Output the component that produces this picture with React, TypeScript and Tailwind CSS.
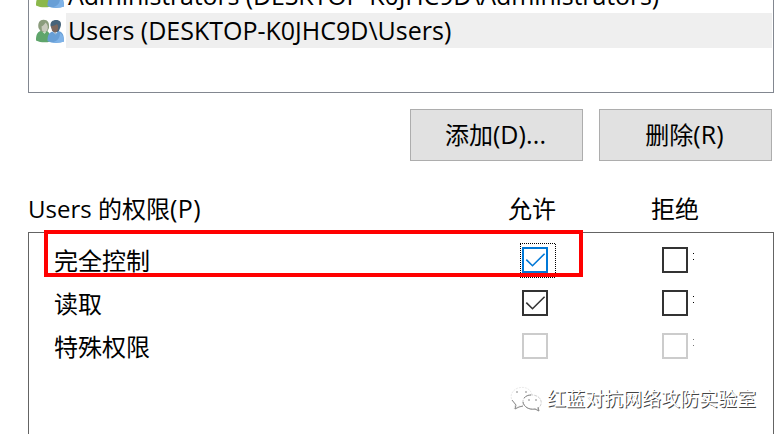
import React from 'react';

const latin = "font-['Open_Sans','Noto_Sans_CJK_SC',sans-serif]";

function UsersIcon({ coat }: { coat: string }) {
  return (
    <svg width="28" height="24" viewBox="0 0 28 24" className="block shrink-0">
      <path d="M2.500 9C1.500 3.500 4 .7 7.500.8c4.500 0 6 3 5.500 8.200l-2 4H5z" fill="#8b9c7c" />
      <path d="M5.500 7.500c2-.8 3-2.500 4-4 2.500 2 3 5.500 1.500 8L9 13.500 6 11.500z" fill="#c9cabd" />
      <path d="M0 21.500C0 16 1 13.500 4.500 12l4 2 2.500-2c2 1 3 3 3 5v5.500c-4 1.500-10 1-14-1z" fill={coat} />
      <path d="M6.500 12.500 8.500 15l2-2.500-2 .8z" fill="#c8dcc4" />
      <path d="M14.500 7c-.5-4 2-6 5.500-6 4 0 6 2.500 4.500 7l-2 5h-5z" fill="#46637a" />
      <path d="M15 7c3 .3 4.500-1 6-2 1.500 2 1.500 4.500.3 7L19 14l-3-2.200z" fill="#7d675c" />
      <path d="M11.500 22c0-6 1.500-8 5-9.500l3 2.500 3-3c4 1 5.500 3.500 5.500 10.500-5 2-12.500 2-16.500-.5z" fill="#689fd6" />
      <path d="M24 14c2.500 1.500 4 4 4 8.500-3 1.200-8 1.500-12 .9 5-1 8-3.400 8-9.400z" fill="#7fb3e8" />
      <path d="m17.500 13.200 2 2.600 2-2.600-1.800.8z" fill="#96b7d4" />
    </svg>
  );
}

type Tone = 'focus' | 'normal' | 'disabled';
const tones: Record<Tone, string> = {
  focus: 'border-[#0078d7] text-[#0078d7]',
  normal: 'border-[#333333] text-[#333333]',
  disabled: 'border-[#cccccc] text-[#cccccc]',
};

function Box({ tone, checked = false }: { tone: Tone; checked?: boolean }) {
  return (
    <span role="checkbox" aria-checked={checked} className={`block h-[26px] w-[26px] shrink-0 border-2 bg-white ${tones[tone]}`}>
      {checked && (
        <svg width="22" height="22" viewBox="0 0 22 22" fill="none" stroke="currentColor" strokeWidth="1.6" className="block">
          <path d="m2.300 10.600 6.200 6.100L20.600 4.700" />
        </svg>
      )}
    </span>
  );
}

function Permission({ label, tone, denyTone, checked = false }: { label: string; tone: Tone; denyTone: Tone; checked?: boolean }) {
  return (
    <div className="flex h-[43px] items-start">
      <span className="w-[468px] pt-px text-[24px] leading-[26px]">{label}</span>
      <span className="relative w-[140px]">
        <Box tone={tone} checked={checked} />
        {tone === 'focus' && (
          <svg className="absolute -top-1 -left-0.5" width="36" height="35" fill="none" stroke="#000" strokeDasharray="1 1" shapeRendering="crispEdges">
            <path d="M0 .5H36M.5 1V35M35.500 1V35M0 34.500H36" />
          </svg>
        )}
      </span>
      <Box tone={denyTone} />
      <span className={`ml-[5px] flex flex-col gap-[5px] pt-[6px] ${denyTone === 'disabled' ? 'text-[#777]' : 'text-black'}`}>
        <i className="block h-px w-px bg-current" />
        <i className="block h-px w-px bg-current" />
      </span>
    </div>
  );
}

function ActionButton({ label, suffix }: { label: string; suffix: string }) {
  return (
    <button className="flex h-[52px] w-[173px] items-center justify-center border border-[#adadad] bg-[#e1e1e1] pr-[2px] pb-px text-[24px]">
      <span className="whitespace-nowrap">
        {label}
        <span className="text-[25px] leading-none tracking-[0.1px]">{suffix}</span>
      </span>
    </button>
  );
}

export default function App() {
  return (
    <main className={`relative flex h-[434px] w-[782px] flex-col overflow-hidden bg-white pl-7 text-black ${latin}`}>
      <section className="flex h-[93px] w-[746px] shrink-0 flex-col border-x border-b border-[#828790] bg-white pr-px pl-[7px]">
        <div className="-mt-[22px] flex h-[35px] shrink-0 items-center">
          <UsersIcon coat="#8bb84b" />
          <span className="ml-[2px] flex h-[35px] flex-1 items-center pl-[2px] text-[25px] leading-[35px] tracking-[-0.13px] whitespace-nowrap">Administrators (DESKTOP-K0JHC9D\Administrators)</span>
        </div>
        <div className="flex h-[35px] shrink-0 items-center">
          <UsersIcon coat="#5fa56b" />
          <span className="ml-[2px] flex h-[35px] flex-1 items-center bg-[#efefef] pl-[2px] text-[25px] leading-[35px] whitespace-nowrap">Users (DESKTOP-K0JHC9D\Users)</span>
        </div>
      </section>
      <div className="mt-4 flex shrink-0 gap-4 pl-[382px]">
        <ActionButton label="添加" suffix="(D)..." />
        <ActionButton label="删除" suffix="(R)" />
      </div>
      <header className="mt-[30px] flex h-[41px] shrink-0 items-start text-[24px] leading-[36px]">
        <span className="w-[480px]">
          Users 的权限<span className="text-[25px] leading-none tracking-[0.5px]">(P)</span>
        </span>
        <span className="w-[143px]">允许</span>
        <span>拒绝</span>
      </header>
      <section className="h-[202px] w-[746px] shrink-0 border-x border-t border-[#646464] bg-white pt-[14px] pl-[25px]">
        <Permission label="完全控制" tone="focus" denyTone="normal" checked />
        <Permission label="读取" tone="normal" denyTone="normal" checked />
        <Permission label="特殊权限" tone="disabled" denyTone="disabled" />
      </section>
      <div className="pointer-events-none absolute top-[230px] left-[44px] h-[47px] w-[539px] border-4 border-[#ff0000]" />
      <div className="absolute top-[384px] left-[510px] flex items-center">
        <svg width="33" height="30" viewBox="0 0 33 30" fill="white" strokeWidth="1">
          <path d="M5 20c-6-5-5-13 3-16 7-2 13 1 14 7-8 1-11 6-9 11H9l-5 3z" stroke="#eaeaea" strokeDasharray="2 1" />
          <path d="m2 16 4 5-1 4 4-2 4-1" stroke="#888" fill="none" />
          <path d="M27 25c7-4 5-13-4-14-8-1-12 5-9 10 3 4 8 5 12 4l3 2z" stroke="#cfcfcf" strokeDasharray="3 1" />
          <path d="M13 18c1 5 6 8 12 7l4 2-1-4M14 14c2-2 4-3 7-3" stroke="#888" fill="none" />
          <path d="M6 8h2M15 8h2M18 16h2M25 16h2" stroke="#888" />
        </svg>
        <span className="ml-[4px] text-[19px] leading-[30px] font-normal whitespace-nowrap text-white [text-shadow:1px_1px_0_#444]">红蓝对抗网络攻防实验室</span>
      </div>
    </main>
  );
}
